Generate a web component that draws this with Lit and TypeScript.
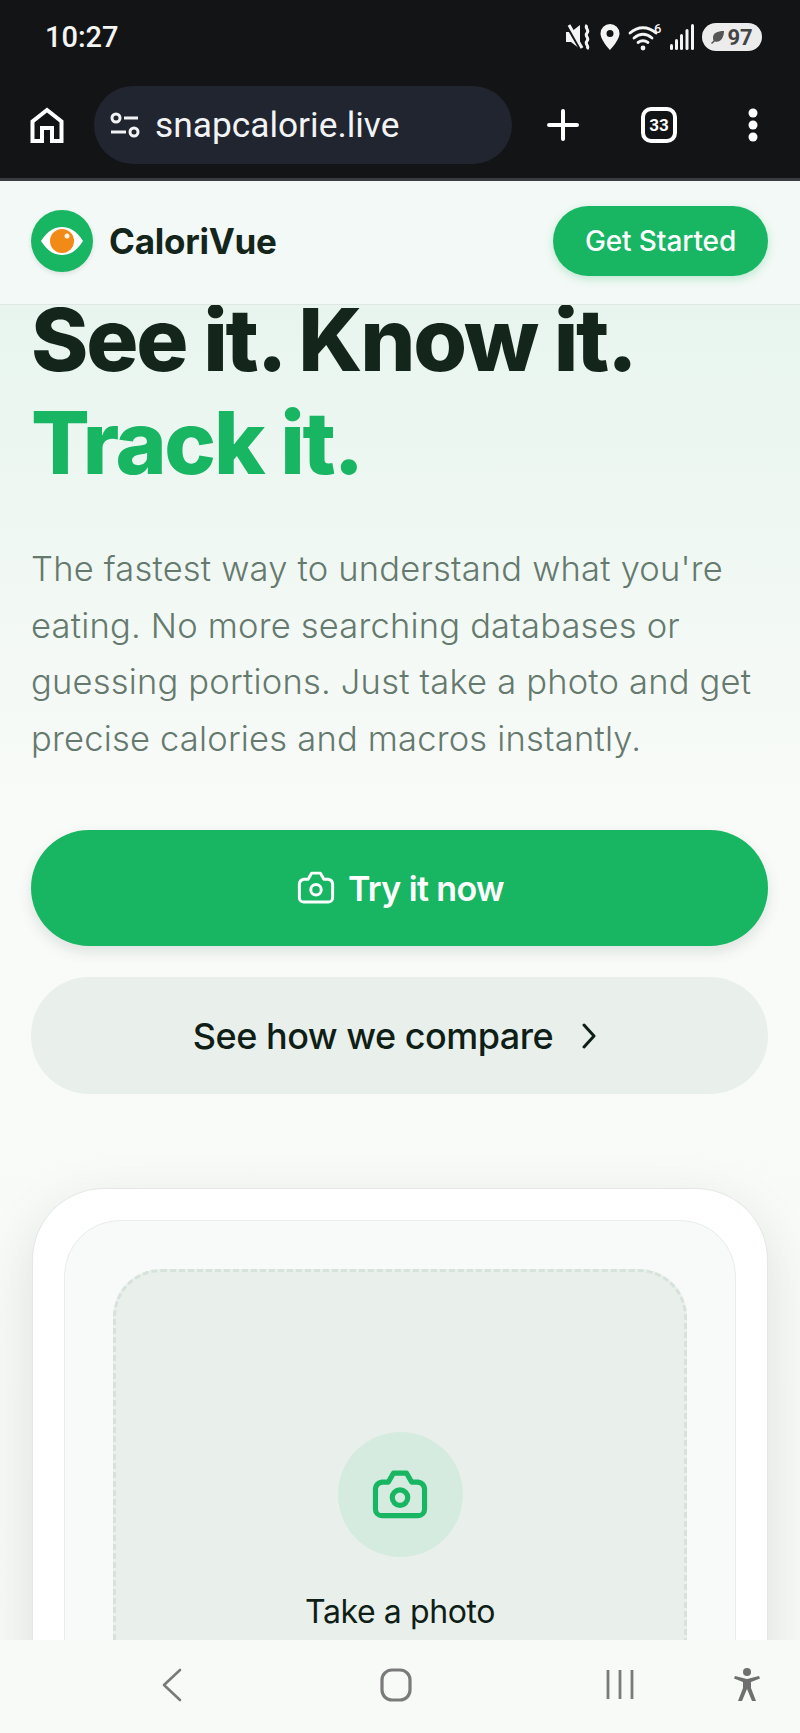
import { LitElement, html, css } from "lit";
import { customElement } from "lit/decorators.js";

const camera = (size: number, sw: number) => html`<svg class="cam" width=${size} height=${size} viewBox="0 0 24 24" fill="none" stroke="currentColor" stroke-width=${sw} stroke-linecap="round" stroke-linejoin="round"><path d="M14.500 3.500h-5L7.500 7H5a3 3 0 0 0-2.500 2.500v8A2.500 2.500 0 0 0 5 20h14a2.500 2.500 0 0 0 2.500-2.500v-8A3 3 0 0 0 19 7h-2.500z"/><circle cx="12" cy="13" r="3"/></svg>`;

@customElement("app-root")
export class AppRoot extends LitElement {
  static styles = css`
    :host { display: flex; flex-direction: column; width: 800px; height: 1733px; overflow: hidden; background: #f8faf8; font-family: Inter, "Noto Sans", sans-serif; color: #0f1f17; }
    * { box-sizing: border-box; }
    svg { display: block; flex: none; }
    .chrome { height: 181px; flex: none; background: #131416; border-bottom: 3px solid #3a3c40; color: #fff; }
    .status { height: 86px; padding: 0 38px 12px 45px; display: flex; align-items: center; justify-content: space-between; }
    .time { font: 500 29px Roboto, sans-serif; color: #f4f4f4; }
    .sys { display: flex; align-items: center; gap: 8px; }
    .battery { width: 60px; height: 28px; border-radius: 14px; background: #ececec; color: #444; display: flex; align-items: center; justify-content: center; gap: 2px; font: 700 22px Roboto, sans-serif; }
    .urlrow { height: 78px; padding-left: 30px; display: flex; align-items: center; }
    .pill { width: 418px; height: 78px; margin-left: 30px; border-radius: 39px; background: #212530; display: flex; align-items: center; gap: 15px; padding-left: 16px; font: 400 35.3px Roboto, sans-serif; color: #f2f3f5; }
    .plus { margin-left: 35px; }
    .tabs { margin-left: 62px; width: 36px; height: 36px; border: 4px solid #fff; border-radius: 10px; display: flex; align-items: center; justify-content: center; font: 700 17px Roboto, sans-serif; }
    .dots { margin-left: 70px; }
    .page { flex: 1; min-height: 0; position: relative; overflow: hidden; }
    header { position: absolute; top: 0; left: 0; right: 0; height: 124px; padding: 0 32px 3px 31px; display: flex; align-items: center; justify-content: space-between; background: #f3f9f6; border-bottom: 1px solid #dfe7e2; z-index: 1; }
    .brand { display: flex; align-items: center; gap: 16px; font-size: 35px; font-weight: 700; letter-spacing: -0.25px; color: #14261c; }
    .logo { width: 62px; height: 62px; border-radius: 50%; background: #18b562; display: flex; align-items: center; justify-content: center; box-shadow: 0 2px 5px rgba(0,0,0,.1); }
    .cta { width: 215px; height: 70px; border-radius: 35px; background: #18b562; color: #fff; font-size: 28px; font-weight: 500; letter-spacing: -0.1px; display: flex; align-items: center; justify-content: center; box-shadow: 0 3px 8px rgba(24,181,98,.25); }
    main { height: 100%; overflow: hidden; padding: 107px 32px 0 31px; background: linear-gradient(180deg, #e8f5ee 0, #e8f5ee 130px, #f9fbf9 640px, #f8faf8 100%); }
    h1 { margin: 0; font-size: 87px; font-weight: 800; line-height: 103px; letter-spacing: -2.2px; color: #14261c; }
    h1 span { display: block; color: #18b562; }
    p { margin: 47px 0 0; font-size: 34.5px; font-weight: 300; line-height: 56.6px; letter-spacing: 0.2px; color: #66796e; white-space: nowrap; }
    .btn { display: flex; align-items: center; justify-content: center; border-radius: 58px; }
    .primary { margin-top: 63px; height: 116px; background: #18b562; color: #fff; gap: 11px; font-size: 34px; font-weight: 600; letter-spacing: -0.6px; box-shadow: 0 6px 14px rgba(20,60,40,.12); }
    .secondary { margin-top: 31px; height: 117px; padding-right: 8px; background: #e9efeb; color: #0f1f17; gap: 27px; font-size: 36px; font-weight: 500; letter-spacing: -0.5px; }
    .card { margin: 94px 0 0 1px; height: 600px; padding: 31px 31px 0; background: #fff; border: 1px solid #e3e8e5; border-radius: 72px; box-shadow: 0 20px 60px rgba(0,0,0,.11); }
    .inner { height: 600px; padding: 48px 48px 0; background: #f8faf9; border: 1px solid #e8ecea; border-radius: 56px; }
    .drop { height: 600px; padding-top: 160px; background: #e9f0eb; border: 3px dashed #d6e2db; border-radius: 48px; display: flex; flex-direction: column; align-items: center; }
    .circle { width: 125px; height: 125px; border-radius: 50%; background: #d5ebdf; color: #18b562; display: flex; align-items: center; justify-content: center; }
    .take { margin-top: 35px; font-size: 32px; font-weight: 400; letter-spacing: -0.4px; color: #0f1f17; }
    nav { height: 93px; flex: none; padding: 0 0 4px 160px; background: #f8faf8; position: relative; z-index: 1; display: flex; align-items: center; }
    .n-home { margin-left: 195px; }
    .n-recents { margin-left: 190px; }
    .n-person { margin-left: 95px; }
  `;

  render() {
    return html`
      <div class="chrome">
        <div class="status">
          <span class="time">10:27</span>
          <div class="sys">
            <svg width="27" height="30" viewBox="0 0 27 30"><path fill="#f4f4f4" d="M1 10h5l9-7v24l-9-7H1z"/><path d="M1 2l15 26" stroke="#131416" stroke-width="3"/><path d="M4 3l13 23" stroke="#f4f4f4" stroke-width="3"/><path d="M22 3c-3 3 3 5 0 8s3 5 0 8 3 5 0 8" fill="none" stroke="#f4f4f4" stroke-width="3"/></svg>
            <svg width="20" height="28" viewBox="0 0 20 28"><path fill-rule="evenodd" fill="#f4f4f4" d="M10 1a9.500 9.500 0 0 1 9.500 9.500C19.500 17 10 27 10 27S.5 17 .5 10.500A9.500 9.500 0 0 1 10 1zm0 6a3.500 3.500 0 1 0 0 7 3.500 3.500 0 0 0 0-7z"/></svg>
            <svg width="34" height="30" viewBox="0 0 34 30" fill="none" stroke="#f4f4f4" stroke-width="2.800" stroke-linecap="round"><path d="M2 11c8-7 18-7 26 0M6 16c6-5 12-5 18 0M10 20.500c3.500-2.500 6.500-2.500 10 0"/><circle cx="15" cy="26" r="2.400" fill="#f4f4f4" stroke="none"/><text x="26" y="11" font-family="Roboto" font-size="13" font-weight="500" fill="#f4f4f4" stroke="none">6</text></svg>
            <svg width="24" height="28" viewBox="0 0 24 28" fill="#f4f4f4"><rect x="0" y="21" width="3" height="6" rx="1.500"/><rect x="5" y="16" width="3" height="11" rx="1.500"/><rect x="10" y="11" width="3" height="16" rx="1.500"/><rect x="15.500" y="6" width="3" height="21" rx="1.500"/><rect x="21" y="1" width="3" height="26" rx="1.500"/></svg>
            <div class="battery"><svg width="14" height="14" viewBox="0 0 14 14" fill="#555"><path d="M13 1C6 1 2 3 2 8c0 1 .3 2 .6 2.500L0 13l1 1 2.800-2.600C9 13 13 8 13 1z"/></svg>97</div>
          </div>
        </div>
        <div class="urlrow">
          <svg width="34" height="36" viewBox="0 0 34 36" fill="none" stroke="#fff" stroke-width="4"><path d="M2.500 34V14.500L17 3l14.500 11.500V34H22V21H12v13z"/></svg>
          <div class="pill">
            <svg width="30" height="26" viewBox="0 0 30 26" fill="none" stroke="#f2f3f5" stroke-width="3"><circle cx="6" cy="6" r="4"/><path d="M14 6h14M1 20h15"/><circle cx="24" cy="20" r="4"/></svg>
            snapcalorie.live
          </div>
          <svg class="plus" width="32" height="32" viewBox="0 0 32 32" stroke="#fff" stroke-width="4" stroke-linecap="round"><path d="M16 2v28M2 16h28"/></svg>
          <div class="tabs">33</div>
          <svg class="dots" width="12" height="34" viewBox="0 0 12 34" fill="#fff"><circle cx="6" cy="5" r="4.500"/><circle cx="6" cy="17" r="4.500"/><circle cx="6" cy="29" r="4.500"/></svg>
        </div>
      </div>
      <div class="page">
        <header>
          <div class="brand">
            <div class="logo">
              <svg width="44" height="30" viewBox="0 0 44 30"><path fill="#fff" d="M1 15C8 4 15 1 22 1s14 3 21 14c-7 11-14 14-21 14S8 26 1 15z"/><circle cx="22" cy="15" r="12" fill="#f28a18"/><circle cx="27" cy="10" r="2.500" fill="#fff" opacity=".9"/></svg>
            </div>
            CaloriVue
          </div>
          <div class="cta">Get Started</div>
        </header>
        <main>
          <h1>See it. Know it.<span>Track it.</span></h1>
          <p>The fastest way to understand what you're<br>eating. No more searching databases or<br>guessing portions. Just take a photo and get<br>precise calories and macros instantly.</p>
          <div class="btn primary">${camera(42, 1.7)}Try it now</div>
          <div class="btn secondary">See how we compare
            <svg width="18" height="26" viewBox="0 0 18 26" fill="none" stroke="#0f1f17" stroke-width="3" stroke-linecap="round" stroke-linejoin="round"><path d="M4 2l10 11L4 24"/></svg>
          </div>
          <div class="card"><div class="inner"><div class="drop">
            <div class="circle">${camera(62, 2)}</div>
            <div class="take">Take a photo</div>
          </div></div></div>
        </main>
      </div>
      <nav>
        <svg width="24" height="34" viewBox="0 0 24 34" fill="none" stroke="#7a7a7a" stroke-width="2.600" stroke-linecap="round" stroke-linejoin="round"><path d="M20 2L4 17l16 15"/></svg>
        <svg class="n-home" width="34" height="34" viewBox="0 0 34 34" fill="none" stroke="#7a7a7a" stroke-width="3.200"><rect x="3" y="2" width="28" height="30" rx="10"/></svg>
        <svg class="n-recents" width="34" height="32" viewBox="0 0 34 32" stroke="#7a7a7a" stroke-width="2.800"><path d="M5 1v29M17 1v29M29 1v29"/></svg>
        <svg class="n-person" width="30" height="36" viewBox="0 0 30 36" fill="#6f6f6f"><circle cx="15" cy="5" r="4"/><path d="M2 11.500l1-2.500 12 3 12-3 1 2.500-9 3.500v6l5 13h-4l-5-12-5 12H6l5-13v-6z"/></svg>
      </nav>
    `;
  }
}
